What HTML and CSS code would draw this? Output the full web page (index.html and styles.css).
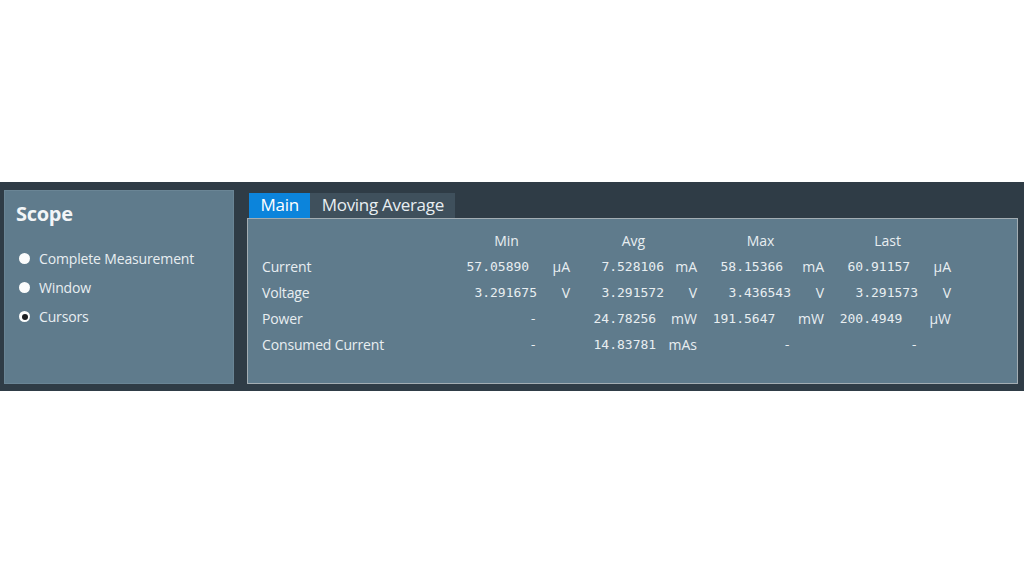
FILE: index.html
```html
<!DOCTYPE html>
<html lang="en">
<head>
    <meta charset="UTF-8">
    <meta name="viewport" content="width=device-width, initial-scale=1.0">
    <title>Measurement Summary</title>
    <link rel="stylesheet" href="styles.css">
</head>
<body>
    <div class="summary-bar">
        <div class="scope-panel">
            <h2>Scope</h2>
            <label class="radio-row"><span class="radio"></span>Complete Measurement</label>
            <label class="radio-row"><span class="radio"></span>Window</label>
            <label class="radio-row"><span class="radio checked"></span>Cursors</label>
        </div>

        <div class="stats-area">
            <div class="tabs">
                <div class="tab active">Main</div>
                <div class="tab">Moving Average</div>
            </div>
            <div class="stats-panel">
                <div class="stats-grid">
                    <div></div>
                    <div class="col-head">Min</div>
                    <div class="col-head">Avg</div>
                    <div class="col-head">Max</div>
                    <div class="col-head">Last</div>

                    <div class="row-label">Current</div>
                    <div class="val">57.05890 </div><div class="unit">µA</div>
                    <div class="val">7.528106</div><div class="unit">mA</div>
                    <div class="val">58.15366 </div><div class="unit">mA</div>
                    <div class="val">60.91157 </div><div class="unit">µA</div>

                    <div class="row-label">Voltage</div>
                    <div class="val">3.291675</div><div class="unit">V</div>
                    <div class="val">3.291572</div><div class="unit">V</div>
                    <div class="val">3.436543</div><div class="unit">V</div>
                    <div class="val">3.291573</div><div class="unit">V</div>

                    <div class="row-label">Power</div>
                    <div class="val">-</div><div class="unit"></div>
                    <div class="val">24.78256 </div><div class="unit">mW</div>
                    <div class="val">191.5647  </div><div class="unit">mW</div>
                    <div class="val">200.4949  </div><div class="unit">µW</div>

                    <div class="row-label">Consumed Current</div>
                    <div class="val">-</div><div class="unit"></div>
                    <div class="val">14.83781 </div><div class="unit">mAs</div>
                    <div class="val">-</div><div class="unit"></div>
                    <div class="val">-</div><div class="unit"></div>
                </div>
            </div>
        </div>
    </div>
</body>
</html>
```

FILE: styles.css
```css
body {
    margin: 0;
    background-color: #fff;
    font-family: "Open Sans", "Noto Sans", sans-serif;
    color: #e8eef1;
}
.summary-bar {
    margin-top: 182px;
    height: 209px;
    box-sizing: border-box;
    padding: 8px 6px 7px 4px;
    background-color: #2f3c46;
    display: flex;
    gap: 13px;
}

/* left: scope selector */
.scope-panel {
    width: 230px;
    box-sizing: border-box;
    background-color: #5f7b8c;
    border: 1px solid #6a8595;
    padding: 8px 11px;
}
.scope-panel h2 {
    margin: 0 0 15px;
    font-size: 20px;
    font-weight: 700;
    line-height: 30px;
    letter-spacing: -0.3px;
    color: #f2f5f7;
}
.radio-row {
    display: flex;
    align-items: center;
    height: 29px;
    padding-left: 3px;
    font-size: 14px;
    letter-spacing: -0.15px;
}
.radio {
    width: 11px;
    height: 11px;
    border-radius: 50%;
    background-color: #fbfcfc;
    margin-right: 9px;
    display: flex;
    align-items: center;
    justify-content: center;
}
.radio.checked::after {
    content: "";
    width: 6px;
    height: 6px;
    border-radius: 50%;
    background-color: #1b1e21;
}

/* right: tabs + statistics table */
.stats-area {
    flex: 1;
    display: flex;
    flex-direction: column;
    padding-top: 3px;
}
.tabs {
    display: flex;
    height: 25px;
    padding-left: 2px;
}
.tab {
    padding: 0 11.5px;
    font-size: 17px;
    line-height: 24px;
    letter-spacing: -0.3px;
    background-color: #3f505c;
    color: #e8eef2;
}
.tab.active {
    background-color: #0c84db;
    color: #fff;
}
.stats-panel {
    flex: 1;
    background-color: #5f7b8c;
    border: 1px solid #a3adb3;
    padding: 8px 14px 0;
}
.stats-grid {
    display: grid;
    grid-template-columns: 181px repeat(4, 94px 33px);
    grid-auto-rows: 26px;
    align-items: center;
    font-size: 14px;
}
.col-head {
    grid-column: span 2;
    text-align: center;
}
.row-label {
    letter-spacing: -0.15px;
}
.val {
    font-family: "DejaVu Sans Mono", "Liberation Mono", monospace;
    font-size: 13px;
    text-align: right;
    white-space: pre;
}
.unit {
    text-align: right;
}
```
